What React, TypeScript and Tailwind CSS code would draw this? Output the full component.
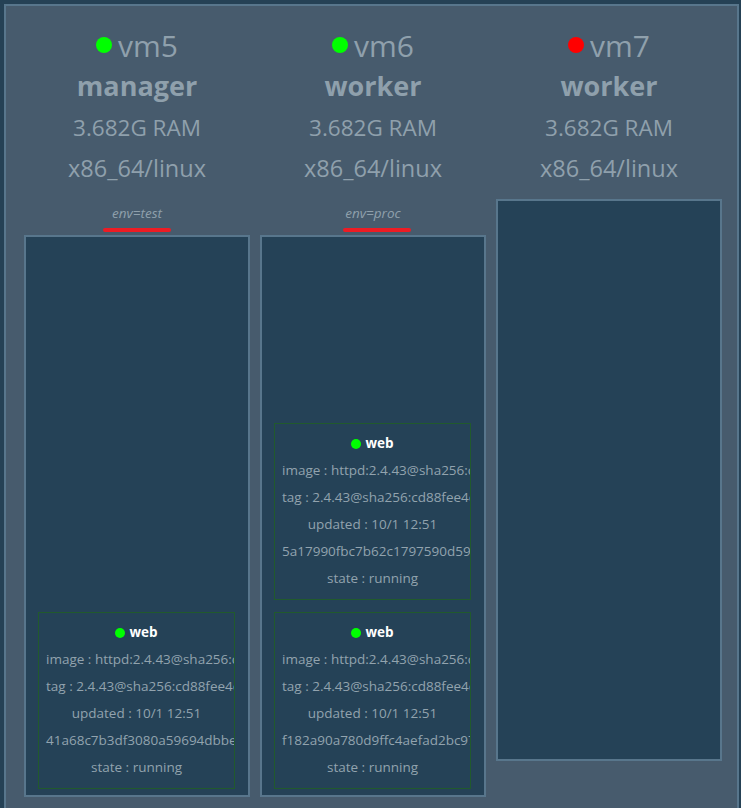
import React from 'react'

type Task = {
  name: string
  image: string
  tag: string
  updated: string
  id: string
  state: string
}

type Node = {
  name: string
  up: boolean
  role: string
  ram: string
  platform: string
  label?: string
  labelShift?: string
  tasks: Task[]
}

const task = (id: string): Task => ({
  name: 'web',
  image: 'httpd:2.4.43@sha256:cd88fee4eab37f0d8cd04b06ef97285ca981c27b4d685f0321e65c5d4fd49357',
  tag: '2.4.43@sha256:cd88fee4eab37f0d8cd04b06ef97285ca981c27b4d685f0321e65c5d4fd49357',
  updated: '10/1 12:51',
  id,
  state: 'running',
})

const nodes: Node[] = [
  {
    name: 'vm5',
    up: true,
    role: 'manager',
    ram: '3.682G RAM',
    platform: 'x86_64/linux',
    label: 'env=test',
    labelShift: 'ml-0',
    tasks: [task('41a68c7b3df3080a59694dbbe0c1f1d2')],
  },
  {
    name: 'vm6',
    up: true,
    role: 'worker',
    ram: '3.682G RAM',
    platform: 'x86_64/linux',
    label: 'env=proc',
    labelShift: 'ml-[7px]',
    tasks: [task('5a17990fbc7b62c1797590d597a1b2c3'), task('f182a90a780d9ffc4aefad2bc97d1e2f')],
  },
  {
    name: 'vm7',
    up: false,
    role: 'worker',
    ram: '3.682G RAM',
    platform: 'x86_64/linux',
    tasks: [],
  },
]

function TaskCard({ t }: { t: Task }) {
  return (
    <div className="w-full border border-[#215a2d] pt-[6px] pb-[7px] px-[7px] overflow-hidden text-center text-[13.5px] leading-[27px] text-[#92a3ae] whitespace-nowrap">
      <div className="flex items-center justify-center gap-[4px] font-bold text-white">
        <span className="inline-block w-[10px] h-[10px] rounded-full bg-[#00ff00]" />
        {t.name}
      </div>
      <div>image : {t.image}</div>
      <div>tag : {t.tag}</div>
      <div>updated : {t.updated}</div>
      <div>{t.id}</div>
      <div>state : {t.state}</div>
    </div>
  )
}

function NodeColumn({ n }: { n: Node }) {
  return (
    <div className="w-[236px] px-[5px] flex flex-col items-center text-[#8fa0ac]">
      <div className="h-[40px] flex items-center gap-[6px] text-[30px]">
        <span className={`inline-block w-[16px] h-[16px] rounded-full ${n.up ? 'bg-[#00ff00]' : 'bg-[#ff0000]'}`} />
        <span>{n.name}</span>
      </div>
      <div className="h-[42px] flex items-center text-[27px] font-bold">{n.role}</div>
      <div className="h-[41px] flex items-center text-[22.5px]">{n.ram}</div>
      <div className="h-[41px] flex items-center text-[23.5px]">{n.platform}</div>
      {n.label ? (
        <div className="h-[46px] pt-[15px] flex flex-col items-center">
          <span className="text-[13.5px] leading-[18px] italic">{n.label}</span>
          <div className={`mt-[6px] h-[4px] w-[68px] rounded-full bg-[#ed1c24] ${n.labelShift}`} />
        </div>
      ) : (
        <div className="h-[10px]" />
      )}
      <div className="w-full h-[562px] border-2 border-[#58768c] bg-[#254257] pl-[12px] pr-[13px] pb-[6px] flex flex-col justify-end gap-[12px]">
        {n.tasks.map((t) => (
          <TaskCard key={t.id} t={t} />
        ))}
      </div>
    </div>
  )
}

export default function App() {
  return (
    <div className="min-h-screen bg-[#254155] pt-[4px] pl-[4px] pr-[2px] font-['Open_Sans',sans-serif]">
      <div className="border-2 border-[#58768c] bg-[#475b6d] pl-[13px] pt-[19px] pb-[40px] flex">
        {nodes.map((n) => (
          <NodeColumn key={n.name} n={n} />
        ))}
      </div>
    </div>
  )
}
